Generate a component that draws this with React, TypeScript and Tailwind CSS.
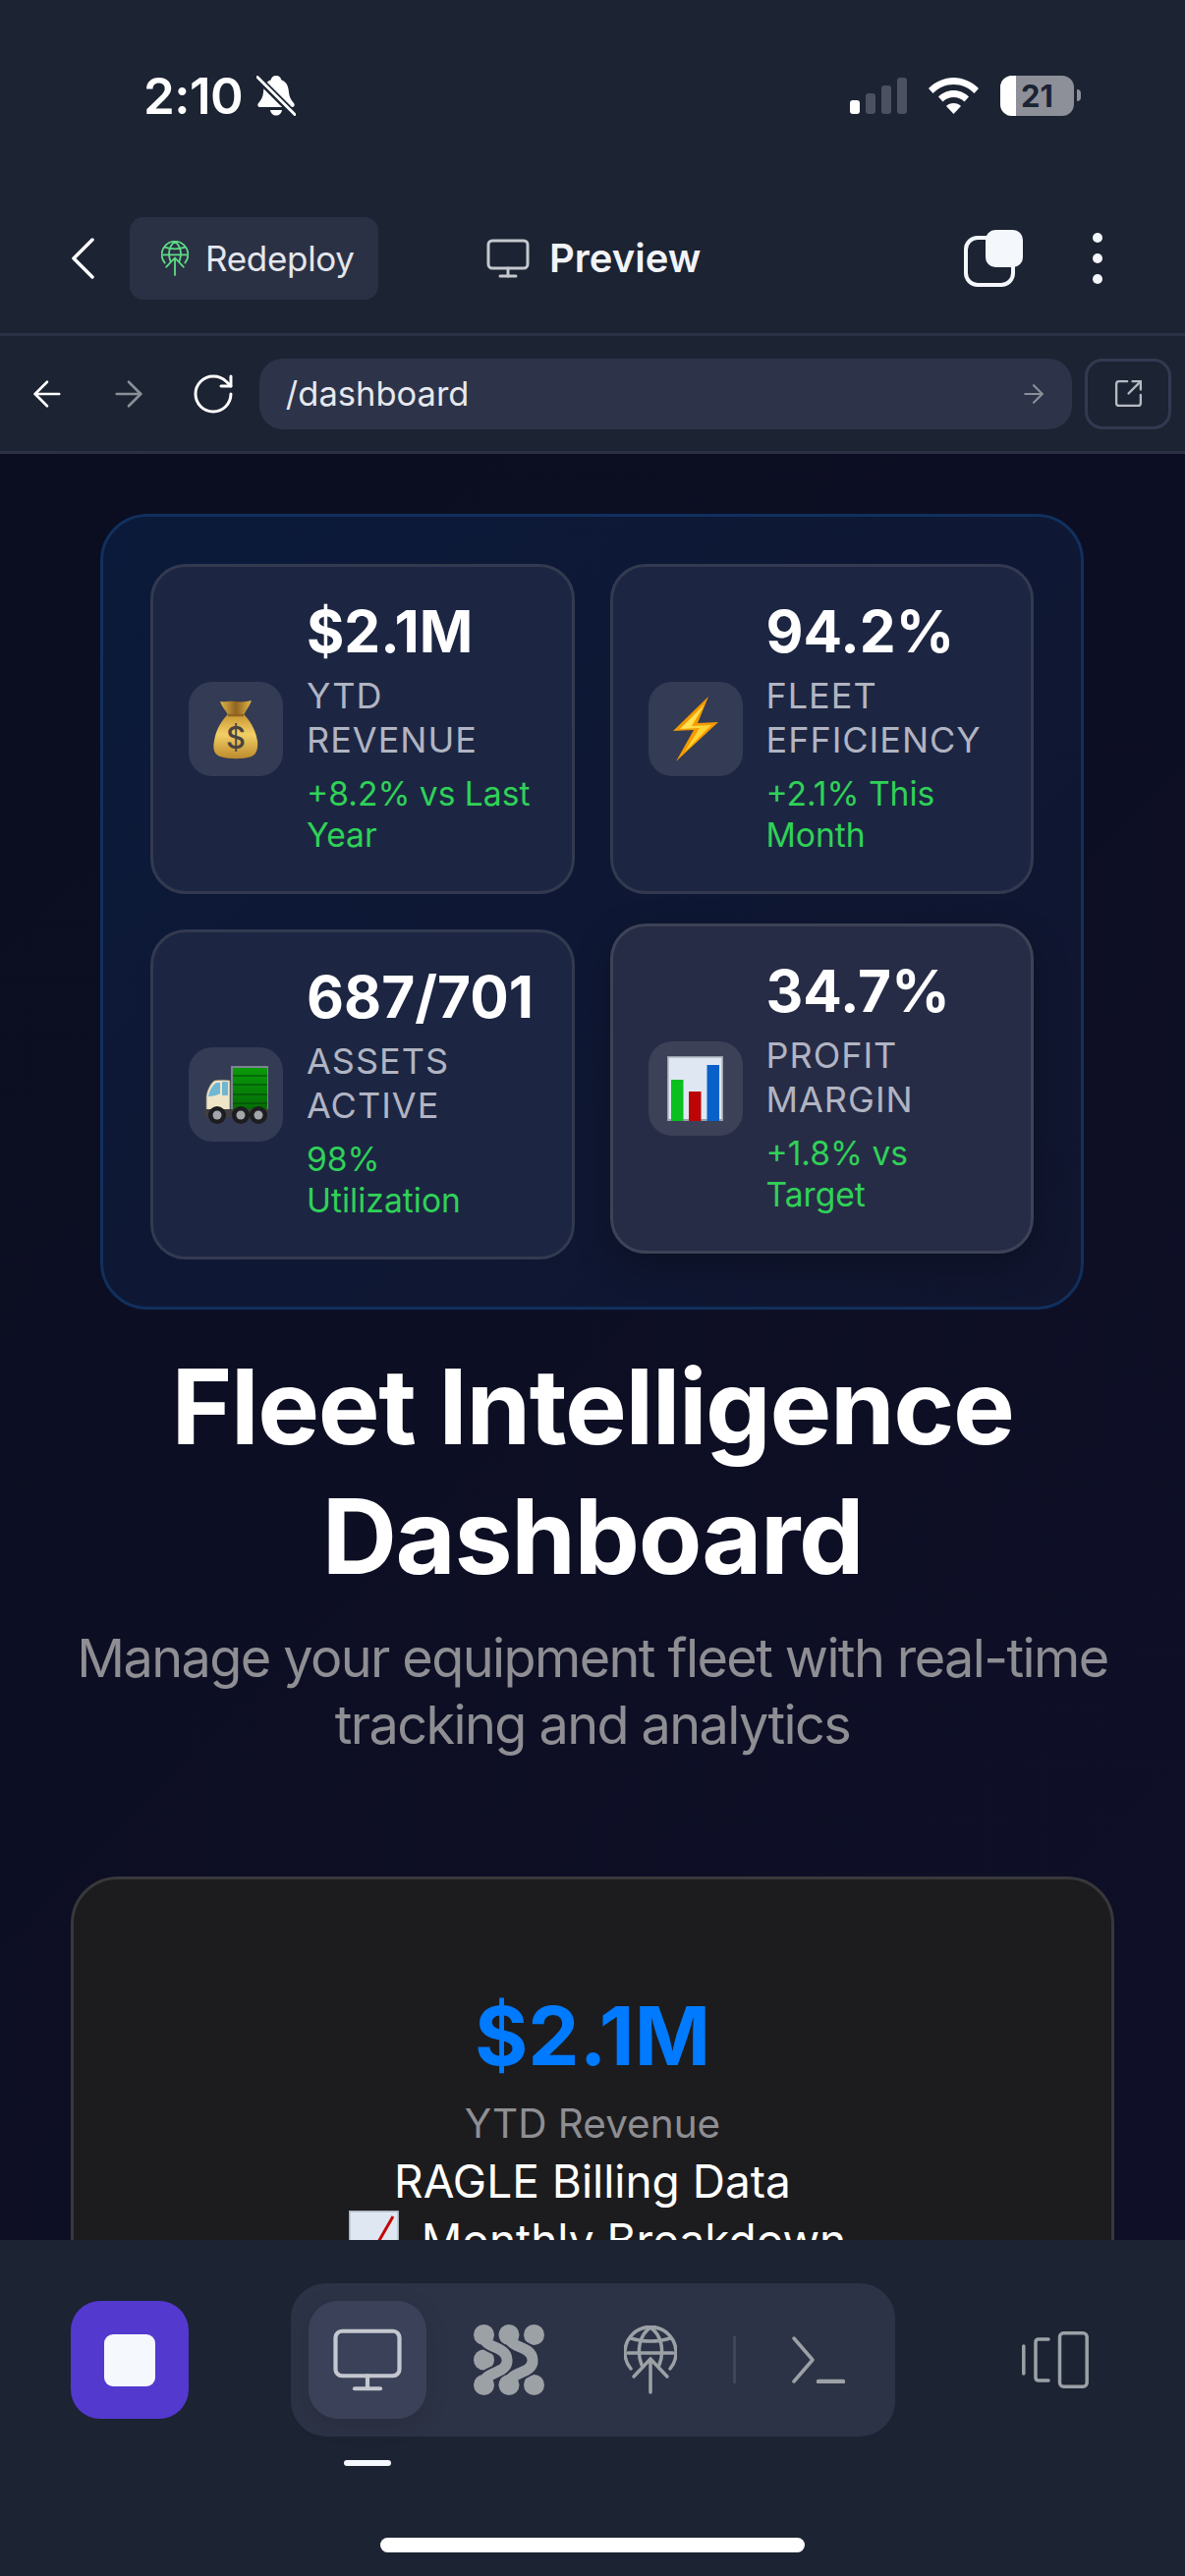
import { ArrowLeft, ArrowRight, RotateCw, SquareArrowOutUpRight, Monitor } from 'lucide-react';
import type { ReactNode } from 'react';

function BellOff() {
  return (
    <svg width="40" height="42" viewBox="0 0 40 42" className="ml-[14px]">
      <path d="M20 1c3 0 5 2 5.500 4.500C31 7.500 32.500 12 33 18c.4 5 2.500 8 5 11 1.500 2 .5 4-2 4H4c-2.500 0-3.500-2-2-4 2.500-3 4.600-6 5-11 .5-6 2-10.500 7.500-12.500C15 3 17 1 20 1z" fill="#fff" />
      <path d="M14 36h12c-.5 3.500-3 5.500-6 5.500S14.500 39.500 14 36z" fill="#fff" />
      <path d="M1 3l37 37" stroke="#1c2333" strokeWidth="7" />
      <path d="M1 2.500l38 38" stroke="#fff" strokeWidth="3" strokeLinecap="round" />
    </svg>
  );
}

function StatusIcons() {
  return (
    <div className="flex items-center">
      <svg width="58" height="37" viewBox="0 0 58 37">
        <rect x="0" y="23" width="10" height="14" rx="3" fill="#fff" />
        <rect x="16" y="16" width="10" height="21" rx="3" fill="#4b5160" />
        <rect x="32" y="8" width="10" height="29" rx="3" fill="#4b5160" />
        <rect x="48" y="0" width="10" height="37" rx="3" fill="#4b5160" />
      </svg>
      <svg width="51" height="37" viewBox="0 0 51 37" className="ml-[22px]">
        <path d="M25.500 0C35 0 44 4 51 11l-4.500 5C40.500 10 33.500 7 25.500 7S10.500 10 4.500 16L0 11C7 4 16 0 25.500 0z" fill="#fff" />
        <path d="M25.500 13c6 0 11.500 2.400 15.500 6.500L36.500 24.500c-3-3-6.800-4.500-11-4.500s-8 1.500-11 4.500L10 19.500C14 15.400 19.500 13 25.500 13z" fill="#fff" />
        <path d="M25.500 26c3 0 5.700 1.100 7.500 3L25.500 37 18 29c1.800-1.900 4.500-3 7.500-3z" fill="#fff" />
      </svg>
      <div className="ml-[22px] flex items-center">
        <div className="relative flex h-[41px] w-[75px] items-center justify-center overflow-hidden rounded-[12px] bg-[#8e9099]">
          <div className="absolute top-0 bottom-0 left-0 w-[16px] bg-white" />
          <span className="relative text-[31px] leading-none font-bold text-[#1c2333]">21</span>
        </div>
        <div className="ml-[3px] h-[12px] w-[4px] rounded-r-full bg-[#8e9099]" />
      </div>
    </div>
  );
}

function GlobeUp({ className, color }: { className?: string; color: string }) {
  return (
    <svg viewBox="0 0 54 70" fill="none" stroke={color} strokeWidth="3.500" strokeLinecap="round" className={className}>
      <path d="M7 44A26 26 0 1 1 47 44" />
      <path d="M18 40C13 27 15 10 27 2c12 8 14 25 9 38" />
      <path d="M4 28h46M7 13c12 4 28 4 40 0" />
      <path d="M27 68V34M10 52l17-18 17 18" />
    </svg>
  );
}

function TopBar() {
  return (
    <header className="shrink-0 bg-[#1c2333]">
      <div className="flex h-[194px] items-center justify-between pr-[106px] pl-[146px]">
        <div className="flex items-center">
          <span className="text-[51px] leading-none font-semibold tracking-[-0.5px] text-white">2:10</span>
          <BellOff />
        </div>
        <StatusIcons />
      </div>

      <div className="flex h-[138px] items-center pl-[72px]">
        <svg width="24" height="42" viewBox="0 0 24 42" fill="none" stroke="#fff" strokeWidth="3.500" strokeLinecap="round" strokeLinejoin="round">
          <path d="M22 2L3 21l19 19" />
        </svg>
        <div className="ml-[36px] flex h-[84px] w-[253px] items-center gap-[17px] rounded-[14px] bg-[#2b3145] pl-[32px]">
          <GlobeUp className="h-[36px] w-[28px]" color="#5fdc86" />
          <span className="text-[35px] leading-none tracking-[-0.3px] text-[#e4e7ec]">Redeploy</span>
        </div>
        <div className="ml-[108px] flex items-center gap-[18px]">
          <Monitor className="h-[48px] w-[48px] text-[#c4c8ce]" strokeWidth={1.5} />
          <span className="text-[40px] leading-none font-semibold text-[#f1f4f8]">Preview</span>
        </div>
        <div className="relative ml-[268px] h-[58px] w-[60px]">
          <div className="absolute bottom-0 left-0 h-[52px] w-[52px] rounded-[14px] border-[4px] border-[#f4f7fb]" />
          <div className="absolute top-0 right-0 h-[38px] w-[38px] rounded-[10px] bg-[#f4f7fb]" />
        </div>
        <div className="ml-[71px] flex flex-col gap-[11px]">
          <div className="h-[10px] w-[10px] rounded-full bg-[#f4f7fb]" />
          <div className="h-[10px] w-[10px] rounded-full bg-[#f4f7fb]" />
          <div className="h-[10px] w-[10px] rounded-full bg-[#f4f7fb]" />
        </div>
      </div>
      <div className="h-[7px]" />

      <div className="flex h-[123px] items-center border-y-[3px] border-[#2b3144] pr-[14px] pl-[27px]">
        <ArrowLeft className="h-[42px] w-[42px] text-white" strokeWidth={1.5} />
        <ArrowRight className="ml-[41px] h-[42px] w-[42px] text-[#8a8f98]" strokeWidth={1.5} />
        <RotateCw className="ml-[41px] h-[48px] w-[48px] text-white" strokeWidth={1.5} />
        <div className="ml-[23px] flex h-[72px] w-[828px] items-center justify-between rounded-[24px] bg-[#2d3348] pr-[24px] pl-[27px]">
          <span className="pt-[2px] text-[34.5px] leading-none text-[#e6e8ee]">/dashboard</span>
          <ArrowRight className="h-[30px] w-[30px] text-[#8a8f98]" strokeWidth={1.7} />
        </div>
        <div className="ml-[13px] flex h-[72px] w-[88px] items-center justify-center rounded-[18px] border-[3px] border-[#323a51]">
          <SquareArrowOutUpRight className="h-[33px] w-[33px] text-[#b6bac2]" strokeWidth={1.7} />
        </div>
      </div>
    </header>
  );
}

function MoneyBag() {
  return (
    <svg width="46" height="61" viewBox="0 0 46 61">
      <defs>
        <linearGradient id="bagBody" x1="0" y1="0" x2="0" y2="1">
          <stop offset="0" stopColor="#c9962f" />
          <stop offset="0.45" stopColor="#f2cf66" />
          <stop offset="1" stopColor="#bb8a2c" />
        </linearGradient>
        <linearGradient id="bagTop" x1="0" y1="0" x2="1" y2="0">
          <stop offset="0" stopColor="#e3b548" />
          <stop offset="0.5" stopColor="#8f6420" />
          <stop offset="1" stopColor="#e3b548" />
        </linearGradient>
      </defs>
      <path d="M7 2c5 1 9-1 16 0s11 0 16-1c-2 6-6 10-8 15H15C13 11 9 8 7 2z" fill="url(#bagTop)" />
      <path d="M15 15h16c5 5 12 14 14 27 1 10-2 14-6 16-9 3-23 3-32 0-5-2-8-6-6-16 2-13 9-22 14-27z" fill="url(#bagBody)" />
      <path d="M15 16h16" stroke="#8f6420" strokeWidth="2.500" />
      <text x="23" y="50" textAnchor="middle" fontSize="31" fontWeight="500" fill="#4a4340" fontFamily="Inter, sans-serif">$</text>
    </svg>
  );
}

function Bolt() {
  return (
    <svg width="46" height="66" viewBox="0 0 46 66">
      <defs>
        <linearGradient id="boltFill" x1="0" y1="0" x2="1" y2="1">
          <stop offset="0" stopColor="#fff27a" />
          <stop offset="1" stopColor="#ffc107" />
        </linearGradient>
      </defs>
      <path d="M36 0L0 35l21-1L3 66l43-40-21 1z" fill="#f39a00" />
      <path d="M32 8L7 33l20-1-15 24 27-27-20 1z" fill="url(#boltFill)" />
    </svg>
  );
}

function Truck() {
  return (
    <svg width="67" height="59" viewBox="0 0 67 59">
      <defs>
        <linearGradient id="truckGreen" x1="0" y1="0" x2="0" y2="1">
          <stop offset="0" stopColor="#0a9a0a" />
          <stop offset="1" stopColor="#046a04" />
        </linearGradient>
      </defs>
      <rect x="28" y="0" width="38" height="49" fill="#7b8590" />
      <rect x="30" y="2" width="35" height="45" fill="url(#truckGreen)" />
      <path d="M30 10h35M30 19h35M30 29h35M30 38h35" stroke="#03420a" strokeWidth="1" />
      <path d="M3 45V32c0-6 4-14 8-17 2-1 15-1 16 0v30z" fill="#efe6c8" stroke="#7f7a66" strokeWidth="0.800" />
      <path d="M5 31c1-6 4-11 8-14h4v11c-3 2-8 3-12 3z" fill="#6fb7d3" />
      <rect x="19" y="16" width="6" height="14" rx="1" fill="#6fb7d3" />
      <rect x="1" y="44" width="65" height="8" fill="#3f3f42" />
      <circle cx="14" cy="50" r="9" fill="#1d1d20" />
      <circle cx="14" cy="50" r="4.500" fill="#a3a6ab" />
      <circle cx="38" cy="50" r="9" fill="#1d1d20" />
      <circle cx="38" cy="50" r="4.500" fill="#a3a6ab" />
      <circle cx="56" cy="50" r="9" fill="#1d1d20" />
      <circle cx="56" cy="50" r="4.500" fill="#a3a6ab" />
    </svg>
  );
}

function BarChart() {
  return (
    <svg width="57" height="66" viewBox="0 0 57 66">
      <rect width="57" height="66" fill="#dfe8f2" />
      <path d="M0 0h57v1.500H0zM0 64h57v2H0zM0 0h1.500v66H0zM55.500 0H57v66h-1.500z" fill="#9aa3ad" />
      <rect x="4" y="24" width="12.500" height="42" fill="#0bbf1f" />
      <rect x="22" y="36" width="12.500" height="30" fill="#bd0505" />
      <rect x="40.500" y="9" width="12.500" height="57" fill="#0a60c9" />
    </svg>
  );
}

function ChartUp() {
  return (
    <svg width="51" height="60" viewBox="0 0 51 60">
      <rect width="51" height="60" fill="#dfe8f2" />
      <path d="M0 0h51v1.500H0zM0 0h1.500v60H0zM49.500 0H51v60h-1.500z" fill="#a9b1ba" />
      <path d="M8 60L22 46 45 6" fill="none" stroke="#c40808" strokeWidth="3" />
    </svg>
  );
}

type Stat = { icon: ReactNode; value: string; label: string; change: string; lifted?: boolean };

const stats: Stat[] = [
  { icon: <MoneyBag />, value: '$2.1M', label: 'YTD REVENUE', change: '+8.2% vs Last Year' },
  { icon: <Bolt />, value: '94.2%', label: 'FLEET EFFICIENCY', change: '+2.1% This Month' },
  { icon: <Truck />, value: '687/701', label: 'ASSETS ACTIVE', change: '98% Utilization' },
  { icon: <BarChart />, value: '34.7%', label: 'PROFIT MARGIN', change: '+1.8% vs Target', lifted: true },
];

function StatCard({ stat }: { stat: Stat }) {
  return (
    <div
      className={
        stat.lifted
          ? 'flex -translate-y-[6px] items-center gap-6 rounded-[36px] border-[3px] border-[#3d4357] bg-[#272c46] px-9 py-9 shadow-[0_12px_36px_rgba(0,0,0,0.25)]'
          : 'flex items-center gap-6 rounded-[36px] border-[3px] border-[#333a50] bg-[#1c2642] px-9 py-9'
      }
    >
      <div
        className={
          stat.lifted
            ? 'flex h-24 w-24 shrink-0 items-center justify-center rounded-[24px] bg-[#3d4157]'
            : 'flex h-24 w-24 shrink-0 items-center justify-center rounded-[24px] bg-[#343b54]'
        }
      >
        {stat.icon}
      </div>
      <div className="min-w-0 flex-1">
        <div className="mb-[13px] text-[58.6px] leading-[60px] font-bold whitespace-nowrap text-white">{stat.value}</div>
        <div className="mb-[11px] text-[36px] leading-[45px] tracking-[1px] text-[#b1b4c2]">{stat.label}</div>
        <div className="text-[33.6px] leading-[42px] text-[#30d158]">{stat.change}</div>
      </div>
    </div>
  );
}

function MainContent() {
  return (
    <main className="min-h-0 flex-1 overflow-hidden bg-[linear-gradient(135deg,#0b0d20,#0f1028)] pt-[61px]">
      <section className="mr-[103px] ml-[102px] grid grid-cols-2 gap-9 rounded-[48px] border-[3px] border-[#11305e] bg-[linear-gradient(135deg,#0b1a3a,#11152e)] p-12">
        {stats.map((stat) => (
          <StatCard key={stat.label} stat={stat} />
        ))}
      </section>

      <h1 className="mt-[33px] text-center text-[105.6px] leading-[132px] font-bold tracking-[-1.4px] text-white">
        Fleet Intelligence
        <br />
        Dashboard
      </h1>
      <p className="mt-6 text-center text-[54px] leading-[67.5px] tracking-[-1.6px] text-[#8e8e93]">
        Manage your equipment fleet with real-time
        <br />
        tracking and analytics
      </p>

      <section className="mt-[121px] mr-[72px] ml-[72px] rounded-[48px] border-[3px] border-[#38383a] bg-[#1c1c1e] pt-[109px] text-center">
        <div className="text-[83px] leading-[101px] font-bold text-[#007aff]">$2.1M</div>
        <div className="mt-[13px] text-[40.5px] leading-[52.5px] text-[#8e8e93]">YTD Revenue</div>
        <div className="mt-[1px] text-[46px] leading-[60px] text-white">RAGLE Billing Data</div>
        <div className="flex items-start justify-center gap-[23px] pl-[10px] text-[46px] leading-[60px] text-white">
          <ChartUp />
          <span>Monthly Breakdown</span>
        </div>
        <div className="h-[200px]" />
      </section>
    </main>
  );
}

function NodesIcon() {
  const first = 'M10.500 12C11 25 33 21 34 36S11 47 10.500 60';
  const second = 'M36 12C37 25 59 21 60 36S37 47 36 60';
  return (
    <svg width="72" height="72" viewBox="0 0 72 72" fill="#9ca1a6">
      <circle cx="10.500" cy="36" r="10.500" />
      <circle cx="61.500" cy="10.500" r="10.500" />
      <circle cx="61.500" cy="61.500" r="10.500" />
      <path d={first} fill="none" stroke="#2d3346" strokeWidth="15" />
      <path d={first} fill="none" stroke="#9ca1a6" strokeWidth="11" />
      <path d={second} fill="none" stroke="#2d3346" strokeWidth="15" />
      <path d={second} fill="none" stroke="#9ca1a6" strokeWidth="11" />
      <circle cx="10.500" cy="10.500" r="10.500" />
      <circle cx="36" cy="10.500" r="10.500" />
      <circle cx="10.500" cy="61.500" r="10.500" />
      <circle cx="36" cy="61.500" r="10.500" />
    </svg>
  );
}

function TerminalIcon() {
  return (
    <svg width="54" height="48" viewBox="0 0 54 48" fill="none" stroke="#9ca1a6" strokeLinecap="round">
      <path d="M2 2l19 22L2 46" strokeWidth="3.500" strokeLinejoin="round" />
      <path d="M27 46h25" strokeWidth="4.500" />
    </svg>
  );
}

function DeviceIcon() {
  return (
    <svg width="68" height="58" viewBox="0 0 68 58" fill="none" stroke="#9ca1a6" strokeWidth="3.500">
      <path d="M1.800 15v28" strokeLinecap="round" />
      <path d="M27 8H17c-2 0-3 1-3 3v36c0 2 1 3 3 3h10" strokeLinecap="round" />
      <rect x="38.500" y="1.800" width="27.700" height="54.400" rx="4" />
    </svg>
  );
}

function BottomBar() {
  return (
    <footer className="h-[342px] shrink-0 bg-[#1c2333] pt-[44px]">
      <div className="flex items-center pl-[72px]">
        <div className="flex h-[120px] w-[120px] items-center justify-center rounded-[30px] bg-[#5339ce]">
          <div className="h-[53px] w-[52px] rounded-[9px] bg-[#f5f8fc]" />
        </div>

        <div className="relative ml-[104px] flex h-[156px] w-[615px] items-center gap-6 rounded-[36px] bg-[#2d3346] pl-[18px]">
          <div className="flex h-[120px] w-[120px] items-center justify-center rounded-[30px] bg-[#3a4159] shadow-[0_6px_24px_rgba(0,0,0,0.12)]">
            <Monitor className="h-[78px] w-[78px] text-[#c4c8ce]" strokeWidth={1.3} />
          </div>
          <div className="flex w-[120px] justify-center">
            <NodesIcon />
          </div>
          <div className="flex w-[120px] justify-center">
            <GlobeUp className="h-[70px] w-[54px]" color="#9ca1a6" />
          </div>
          <div className="h-[48px] w-[3px] bg-[#3f4760]" />
          <div className="flex w-[120px] justify-center">
            <TerminalIcon />
          </div>
          <div className="absolute top-[180px] left-[54px] h-[6px] w-[48px] rounded-full bg-[#f5f8fc]" />
        </div>

        <div className="ml-[129px]">
          <DeviceIcon />
        </div>
      </div>

      <div className="mx-auto mt-[103px] h-[15px] w-[432px] rounded-full bg-white" />
    </footer>
  );
}

export default function App() {
  return (
    <div className="flex h-[2622px] w-[1206px] flex-col overflow-hidden bg-[#1c2333] font-['Inter',sans-serif]">
      <TopBar />
      <MainContent />
      <BottomBar />
    </div>
  );
}
